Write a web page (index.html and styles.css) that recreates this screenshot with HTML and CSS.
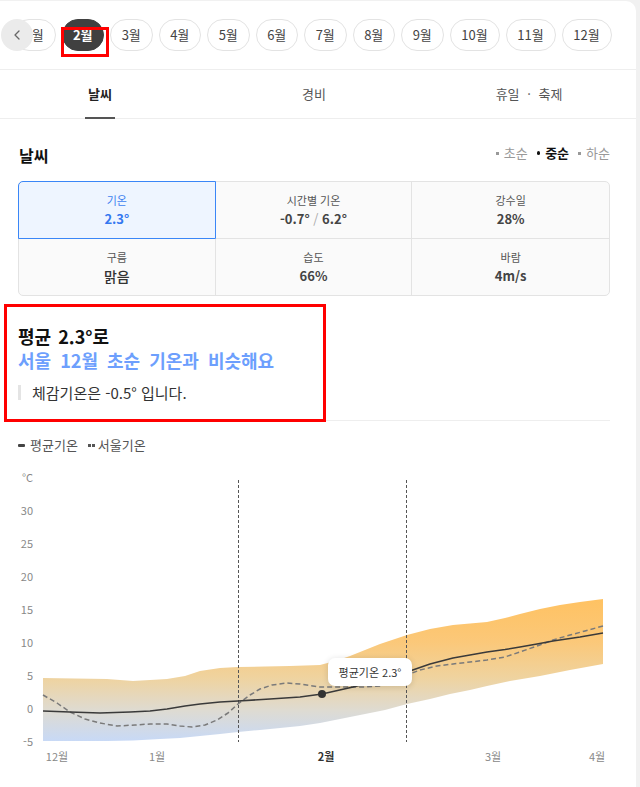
FILE: index.html
```html
<!DOCTYPE html>
<html lang="ko">
<head>
<meta charset="utf-8">
<title>날씨</title>
<link rel="stylesheet" href="styles.css">
</head>
<body>
<div class="card">
  <div class="months">
    <div class="chips">
      <span class="chip">1월</span>
      <span class="chip active">2월</span>
      <span class="chip">3월</span>
      <span class="chip">4월</span>
      <span class="chip">5월</span>
      <span class="chip">6월</span>
      <span class="chip">7월</span>
      <span class="chip">8월</span>
      <span class="chip">9월</span>
      <span class="chip dd">10월</span>
      <span class="chip dd">11월</span>
      <span class="chip dd">12월</span>
    </div>
    <button class="prev" aria-label="이전">
      <svg width="12" height="12" viewBox="0 0 12 12"><path d="M8 2 L4 6 L8 10" fill="none" stroke="#666" stroke-width="1.3" stroke-linecap="round" stroke-linejoin="round"/></svg>
    </button>
  </div>

  <nav class="tabs">
    <span class="tab active">날씨</span>
    <span class="tab">경비</span>
    <span class="tab wide">휴일 · 축제</span>
  </nav>

  <section class="weather">
    <div class="head">
      <h2>날씨</h2>
      <ul class="period">
        <li><i class="dot"></i>초순</li>
        <li class="on"><i class="dot"></i>중순</li>
        <li><i class="dot"></i>하순</li>
      </ul>
    </div>

    <div class="stats">
      <div class="cell active"><span class="lbl">기온</span><span class="val">2.3°</span></div>
      <div class="cell"><span class="lbl">시간별 기온</span><span class="val">-0.7° <em>/</em> 6.2°</span></div>
      <div class="cell last-col"><span class="lbl">강수일</span><span class="val">28%</span></div>
      <div class="cell last-row"><span class="lbl">구름</span><span class="val plain">맑음</span></div>
      <div class="cell last-row"><span class="lbl">습도</span><span class="val">66%</span></div>
      <div class="cell last-row last-col"><span class="lbl">바람</span><span class="val">4m/s</span></div>
    </div>

    <div class="summary">
      <p class="title">평균 2.3°로</p>
      <p class="title blue">서울 12월 초순 기온과 비슷해요</p>
      <p class="quote">체감기온은 -0.5° 입니다.</p>
    </div>

    <div class="legend">
      <span class="lg"><i class="solid"></i>평균기온</span>
      <span class="lg"><i class="dashed"><b></b><b></b></i>서울기온</span>
    </div>

    <div class="chart">
      <svg class="plot" width="636" height="327" viewBox="0 460 636 327">
        <defs>
          <linearGradient id="band" gradientUnits="userSpaceOnUse" x1="0" y1="600" x2="0" y2="743">
            <stop offset="0" stop-color="#ffc262"/>
            <stop offset="0.3" stop-color="#fbc879"/>
            <stop offset="0.55" stop-color="#efd39f"/>
            <stop offset="0.78" stop-color="#dedbd2"/>
            <stop offset="1" stop-color="#c7d9f7"/>
          </linearGradient>
        </defs>
        <g class="ylab">
          <text x="22" y="478">°C</text>
          <text x="33" y="511" text-anchor="end">30</text>
          <text x="33" y="544" text-anchor="end">25</text>
          <text x="33" y="577" text-anchor="end">20</text>
          <text x="33" y="610" text-anchor="end">15</text>
          <text x="33" y="643" text-anchor="end">10</text>
          <text x="33" y="676" text-anchor="end">5</text>
          <text x="33" y="709" text-anchor="end">0</text>
          <text x="33" y="742" text-anchor="end">-5</text>
        </g>
        <path fill="url(#band)" d="M43,679 L75,679.5 L107,680 L133,682 L167,680 L185,677 L200,672 L220,669 L238,668 L265,667.5 L290,667 L320,666 L335,662 L350,657 L365,651 L380,645 L395,640 L407,636 L430,630 L453,626 L470,624.5 L487,623 L505,619 L520,615 L540,610 L560,606 L580,603 L603,600 L603,665 L570,671 L540,677 L510,682 L487,687 L470,691 L450,695 L430,700 L407,705 L385,711 L360,716 L340,720 L320,724 L300,727 L280,729 L260,731 L238,733 L220,735 L200,737 L180,739 L160,740 L133,741.5 L107,742 L43,742 Z"/>
        <line class="vline" x1="238.5" y1="481" x2="238.5" y2="743"/>
        <line class="vline" x1="406.5" y1="481" x2="406.5" y2="743"/>
        <path class="seoul" d="M43,696 L57,704 L70,713 L85,720 L100,724 L117,727 L135,726 L150,725 L167,725 L180,727 L192,728 L205,726 L217,721 L228,714 L238,705 L250,696 L260,690 L272,686 L287,684 L300,685 L320,688 L340,688 L365,688 L380,687 L395,682 L407,676 L420,671 L437,667 L453,665 L470,663 L487,661 L505,658 L520,653 L537,647 L553,641 L570,636 L585,632 L603,627"/>
        <path class="mean" d="M43,712 L70,713 L100,714 L130,713 L150,712 L167,710 L185,707 L200,705 L220,703 L238,702 L270,700 L300,698 L322,695 L353,688 L380,681 L407,673 L430,665 L453,659 L470,656 L487,653 L505,650.5 L520,648 L537,645 L553,642 L580,638 L603,634"/>
        <circle cx="322" cy="695" r="4" fill="#333"/>
        <g class="xlab">
          <text x="57" y="757">12월</text>
          <text x="157" y="757">1월</text>
          <text x="326" y="757" class="cur">2월</text>
          <text x="493" y="757">3월</text>
          <text x="597" y="757">4월</text>
        </g>
      </svg>
      <div class="tip">평균기온 2.3°</div>
    </div>
  </section>
</div>
<div class="mark mark-month"></div>
<div class="mark mark-summary"></div>
</body>
</html>
```

FILE: styles.css
```css
* { box-sizing: border-box; }
html, body { margin: 0; padding: 0; }
body {
  background: #f1f1f1;
  font-family: "Noto Sans CJK KR", "Noto Sans", sans-serif;
  color: #333;
  position: relative;
  overflow: hidden;
  height: 787px;
}
p, h2, ul { margin: 0; padding: 0; }
ul { list-style: none; }

.card {
  width: 636px;
  margin-top: 1px;
  background: #fff;
  border-top-right-radius: 10px;
  min-height: 800px;
}

/* month chips */
.months {
  position: relative;
  padding: 18px 0 18px 13px;
  border-bottom: 1px solid #eeeeee;
  overflow: hidden;
}
.chips {
  display: flex;
  gap: 6px;
}
.chip {
  flex: none;
  width: 42.5px;
  height: 32px;
  border: 1px solid #e3e3e3;
  border-radius: 16px;
  font-size: 13px;
  line-height: 30px;
  text-align: center;
  color: #444;
  background: #fff;
  white-space: nowrap;
}
.chip.dd { width: 50px; }
.chip.active {
  background: #404040;
  border-color: #404040;
  color: #fff;
  font-weight: 700;
}
.prev {
  position: absolute;
  left: 1px;
  top: 18px;
  width: 32px;
  height: 32px;
  border: 0;
  border-radius: 50%;
  background: #ebebeb;
  padding: 0;
  display: flex;
  align-items: center;
  justify-content: center;
}
.prev svg { display: block; }

/* tabs */
.tabs {
  display: grid;
  grid-template-columns: 200px 228px 202px;
  height: 49px;
  border-bottom: 1px solid #eeeeee;
}
.tab {
  position: relative;
  text-align: center;
  font-size: 13px;
  line-height: 48px;
  color: #555;
}
.tab.wide { word-spacing: 4px; }
.tab.active {
  color: #222;
  font-weight: 700;
}
.tab.active::after {
  content: "";
  position: absolute;
  left: 50%;
  bottom: -1px;
  width: 30px;
  margin-left: -15px;
  height: 2px;
  background: #555;
}

/* weather section */
.weather {
  padding: 0 26px 0 18px;
}
.head {
  display: flex;
  justify-content: space-between;
  align-items: center;
  padding-top: 20px;
  height: 52px;
}
.head h2 {
  font-size: 16px;
  font-weight: 700;
  line-height: 32px;
  color: #111;
  padding-left: 1px;
}
.period {
  display: flex;
  gap: 9px;
  margin-bottom: 4px;
}
.period li {
  display: flex;
  align-items: center;
  font-size: 13px;
  line-height: 20px;
  color: #999;
}
.period .dot {
  width: 3px;
  height: 3px;
  background: #999;
  margin-right: 5px;
}
.period li.on { color: #111; font-weight: 700; }
.period li.on .dot { background: #111; border-radius: 50%; width: 3.5px; height: 3.5px; }

/* stats grid */
.stats {
  margin-top: 10px;
  display: grid;
  grid-template-columns: repeat(3, 1fr);
  grid-template-rows: 57px 56px;
  border: 1px solid #e3e3e3;
  border-radius: 5px;
  background: #fafafa;
}
.cell {
  display: flex;
  flex-direction: column;
  align-items: center;
  justify-content: center;
  gap: 2px;
  border-right: 1px solid #e3e3e3;
  border-bottom: 1px solid #e3e3e3;
}
.cell.last-col { border-right: 0; }
.cell.last-row { border-bottom: 0; }
.cell .lbl {
  font-size: 11px;
  line-height: 16px;
  color: #555;
}
.cell .val {
  font-size: 13px;
  line-height: 18px;
  font-weight: 700;
  color: #444;
}
.cell .val.plain { font-weight: 500; font-size: 14px; color: #333; }
.cell .val em {
  font-style: normal;
  font-weight: 400;
  color: #aaa;
}
.cell.active {
  margin: -1px 0 0 -1px;
  border: 1px solid #3a86f7;
  border-top-left-radius: 5px;
  background: #eef5ff;
}
.cell.active .lbl { color: #3c7ff0; }
.cell.active .val { color: #3478f0; }

/* summary */
.summary {
  margin-top: 28px;
  padding-bottom: 20px;
  border-bottom: 1px solid #eeeeee;
}
.title {
  font-size: 18px;
  font-weight: 700;
  line-height: 24px;
  color: #111;
  word-spacing: 2px;
}
.title.blue { color: #6d9ffd; word-spacing: 4px; }
.quote {
  margin-top: 13px;
  border-left: 3px solid #e4e4e4;
  padding-left: 11px;
  font-size: 15px;
  line-height: 15px;
  color: #333;
}

/* legend */
.legend {
  display: flex;
  gap: 10px;
  margin-top: 14px;
  font-size: 13px;
  line-height: 20px;
  color: #555;
}
.lg { display: flex; align-items: center; }
.lg .solid {
  width: 7px;
  height: 3px;
  background: #444;
  border-radius: 1px;
  margin-right: 5px;
}
.lg .dashed {
  display: flex;
  gap: 1px;
  margin-right: 3px;
}
.lg .dashed b {
  width: 3px;
  height: 3px;
  background: #555;
}

/* chart */
.chart {
  position: relative;
  margin: 4px -26px 0 -18px;
  height: 327px;
}
.plot { display: block; }
.plot text {
  font-family: "Noto Sans CJK KR", "Noto Sans", sans-serif;
  font-size: 11px;
  fill: #888;
  dominant-baseline: central;
}
.xlab text { text-anchor: middle; }
.xlab text.cur { fill: #333; font-weight: 700; }
.vline {
  stroke: #555;
  stroke-width: 1;
  stroke-dasharray: 3 2;
}
.seoul {
  fill: none;
  stroke: #7a7a7a;
  stroke-width: 1.5;
  stroke-dasharray: 5 3;
  stroke-linejoin: round;
}
.mean {
  fill: none;
  stroke: #3a3a3a;
  stroke-width: 1.5;
  stroke-linejoin: round;
}
.tip {
  position: absolute;
  left: 328px;
  top: 199px;
  width: 84px;
  height: 28px;
  border-radius: 7px;
  background: #fff;
  box-shadow: 0 1px 6px rgba(0, 0, 0, 0.14);
  font-size: 11px;
  line-height: 28px;
  text-align: center;
  color: #333;
}

/* annotation boxes */
.mark {
  position: absolute;
  border: 3px solid #f00;
  pointer-events: none;
}
.mark-month { left: 61px; top: 27px; width: 48px; height: 30px; }
.mark-summary { left: 4px; top: 304px; width: 322px; height: 118px; }
```
